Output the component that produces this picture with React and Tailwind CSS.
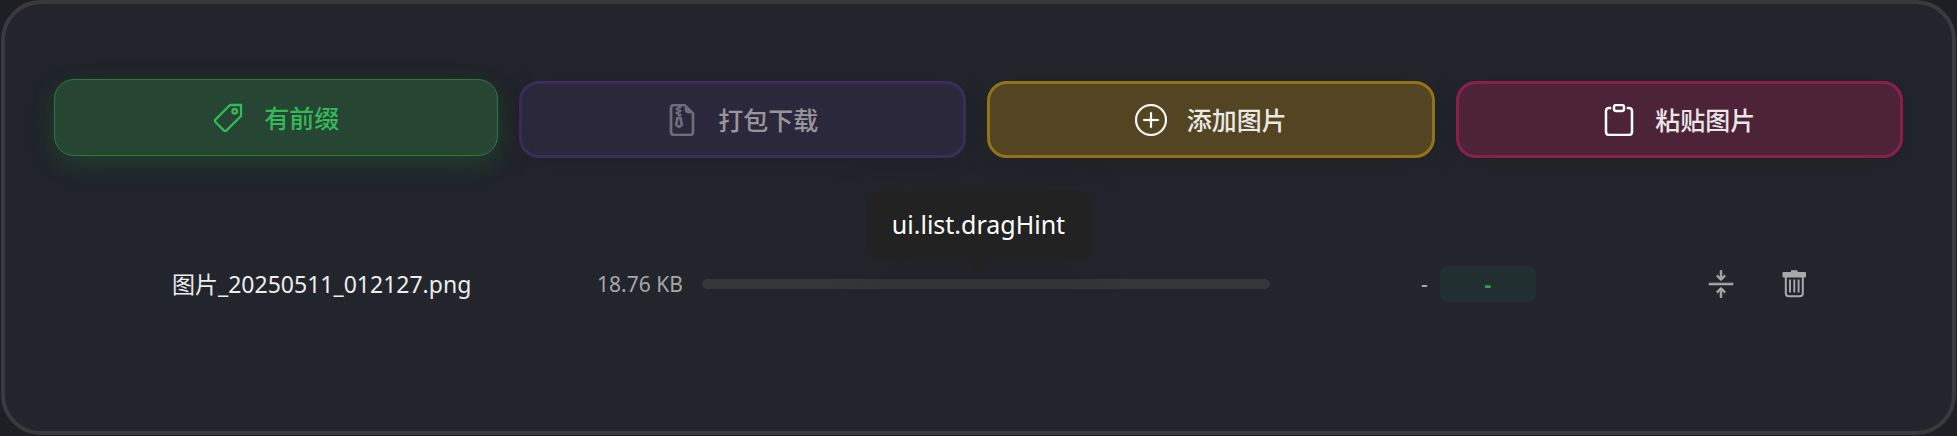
import { BsArrowsCollapse, BsClipboard, BsFileEarmarkZip, BsPlusCircle } from "react-icons/bs";

function TagIcon({ className }) {
  return (
    <svg viewBox="0 0 32 32" fill="none" stroke="currentColor" strokeWidth="2.3" strokeLinejoin="round" className={className} aria-hidden="true">
      <path d="M18 3h11v11L14.600 28.400a2 2 0 0 1-2.800 0L3.600 20.200a2 2 0 0 1 0-2.800z" />
      <circle cx="22.700" cy="9.300" r="2.300" />
    </svg>
  );
}

function TrashIcon({ className }) {
  return (
    <svg viewBox="0 0 28 28" fill="none" className={className} aria-hidden="true">
      <path d="M10 0.300h6.500v1.700H24a1 1 0 0 1 1 1v3.500a1 1 0 0 1-1 1H2.500a1 1 0 0 1-1-1V3a1 1 0 0 1 1-1H10z" fill="currentColor" />
      <path d="M4.800 7v16.300a3 3 0 0 0 3 3h11a3 3 0 0 0 3-3V7" stroke="currentColor" strokeWidth="2" />
      <path d="M9 9.500v13M13.300 9.500v13M17.600 9.500v13" stroke="currentColor" strokeWidth="1.900" />
    </svg>
  );
}

const actions = [
  {
    label: "有前缀",
    Icon: TagIcon,
    look: "-translate-y-0.5 border border-[#2a7a3f] bg-[#264633] text-[#34b858] shadow-[0_8px_24px_rgba(40,167,69,0.22),0_0_32px_rgba(32,32,32,0.7)]",
  },
  {
    label: "打包下载",
    Icon: BsFileEarmarkZip,
    disabled: true,
    look: "border-3 border-[#3a2d5c] bg-[#2c283c] text-[#98969c] shadow-[0_4px_16px_#202225]",
    iconLook: "text-[#706d79] [stroke-width:0.35]",
  },
  {
    label: "添加图片",
    Icon: BsPlusCircle,
    look: "border-3 border-[#94721a] bg-[#534522] text-[#ebe9e6] shadow-[0_4px_20px_#202225]",
    iconLook: "text-white [stroke-width:0.1]",
  },
  {
    label: "粘贴图片",
    Icon: BsClipboard,
    look: "border-3 border-[#8a204a] bg-[#4d2437] text-[#eae6e8] shadow-[0_4px_20px_#202225]",
    iconLook: "text-white [stroke-width:0.25]",
  },
];

function ActionButton({ label, Icon, disabled, look, iconLook = "" }) {
  return (
    <button
      type="button"
      disabled={disabled}
      className={`flex flex-1 items-center justify-center gap-5 rounded-[20px] text-[25px] leading-8 font-medium ${look}`}
    >
      <Icon className={`size-8 ${iconLook}`} />
      <span>{label}</span>
    </button>
  );
}

export default function App() {
  return (
    <div className="flex min-h-screen bg-[#1e1f24] px-px pb-px font-['Noto_Sans','Noto_Sans_CJK_SC',sans-serif]">
      <main className="flex-1 rounded-[40px] border-4 border-[#3a3a3e] bg-[#22252c] px-[49px] pt-[77px] pb-20">
        <div className="flex h-[77px] gap-[21px]">
          {actions.map((action) => (
            <ActionButton key={action.label} {...action} />
          ))}
        </div>

        <div className="relative mt-[105px] flex h-[42px] items-center pr-[94px] pl-[118px]">
          <span className="w-[425px] text-[23px] leading-8 text-[#ededee]">图片_20250511_012127.png</span>
          <span className="w-[105px] text-[21px] leading-7 text-[#a6a6a8]">18.76 KB</span>
          <div role="progressbar" aria-label="18.76 KB" aria-valuenow={0} className="h-[10px] min-w-0 flex-1 rounded-full bg-[#34363a]" />
          <div className="ml-[151px] flex w-[266px] items-center gap-3">
            <span className="text-[21px] leading-7 font-medium text-[#a6a6a8]">-</span>
            <span className="w-24 rounded-lg bg-[#222f30] py-1 text-center text-[21px] leading-7 font-bold text-[#28a745]">-</span>
          </div>
          <div className="ml-5 flex w-[102px] justify-between text-[#a9a9ab]">
            <button type="button" aria-label="压缩">
              <BsArrowsCollapse className="size-7 [stroke-width:0.4]" />
            </button>
            <button type="button" aria-label="删除">
              <TrashIcon className="size-7" />
            </button>
          </div>

          <div
            role="tooltip"
            className="absolute bottom-full left-1/2 mb-[5px] -translate-x-1/2 rounded-xl bg-[#222222] px-[26px] py-[17px] text-[25px] leading-[33px] text-white shadow-[0_8px_32px_rgba(34,34,34,0.7)]"
          >
            ui.list.dragHint
            <svg viewBox="0 0 32 16" className="absolute top-full left-1/2 h-4 w-8 -translate-x-1/2" aria-hidden="true">
              <path d="M0 0h32L16 16z" fill="#222222" />
            </svg>
          </div>
        </div>
      </main>
    </div>
  );
}
